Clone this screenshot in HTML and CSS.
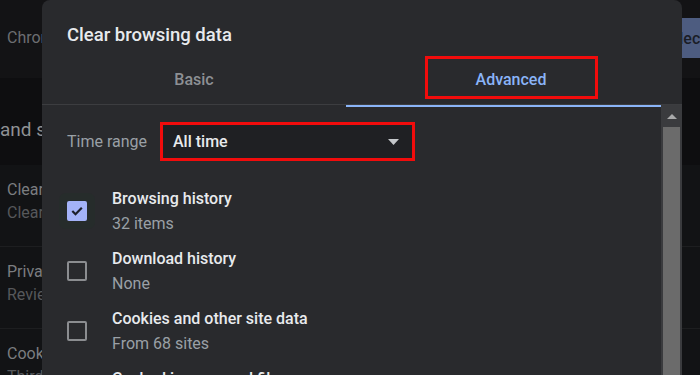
FILE: index.html
```html
<!DOCTYPE html>
<html lang="en">
<head>
    <meta charset="UTF-8">
    <meta name="viewport" content="width=device-width, initial-scale=1.0">
    <title>Clear browsing data</title>
    <link rel="stylesheet" href="styles.css">
</head>
<body>
    <!-- Settings page behind the dialog (dimmed) -->
    <div class="page">
        <div class="toolbar">
            <span class="toolbar-title">Chrome settings</span>
            <button class="toolbar-btn">Select</button>
        </div>
        <div class="section-title">and security</div>
        <div class="card">
            <div class="card-row">
                <div class="row-title">Clear browsing data</div>
                <div class="row-sub">Clear history, cookies, cache, and more</div>
            </div>
            <div class="card-row">
                <div class="row-title">Privacy Guide</div>
                <div class="row-sub">Review key privacy and security controls</div>
            </div>
            <div class="card-row">
                <div class="row-title">Cookies and other site data</div>
                <div class="row-sub">Third-party cookies are blocked</div>
            </div>
        </div>
    </div>

    <!-- Dialog -->
    <div class="dialog">
        <div class="dialog-title">Clear browsing data</div>
        <div class="tabs">
            <div class="tab">Basic</div>
            <div class="tab active"><span class="mark tab-mark">Advanced</span></div>
        </div>
        <div class="dialog-body">
            <div class="content">
                <div class="time-range">
                    <span class="label">Time range</span>
                    <div class="select mark">
                        <span>All time</span>
                        <svg class="caret" width="11" height="6" viewBox="0 0 11 6"><path d="M0 0h11L5.5 6z" fill="#c4c7ca"/></svg>
                    </div>
                </div>
                <div class="option">
                    <div class="checkbox checked">
                        <svg width="14" height="14" viewBox="0 0 14 14"><path d="M2.3 7l3.2 3.2L11.8 3.8" fill="none" stroke="#1c1f2a" stroke-width="2.2"/></svg>
                    </div>
                    <div class="option-text">
                        <div class="option-title">Browsing history</div>
                        <div class="option-sub">32 items</div>
                    </div>
                </div>
                <div class="option">
                    <div class="checkbox"></div>
                    <div class="option-text">
                        <div class="option-title">Download history</div>
                        <div class="option-sub">None</div>
                    </div>
                </div>
                <div class="option">
                    <div class="checkbox"></div>
                    <div class="option-text">
                        <div class="option-title">Cookies and other site data</div>
                        <div class="option-sub">From 68 sites</div>
                    </div>
                </div>
                <div class="option">
                    <div class="checkbox"></div>
                    <div class="option-text">
                        <div class="option-title">Cached images and files</div>
                        <div class="option-sub">Less than 320 MB</div>
                    </div>
                </div>
            </div>
            <div class="scrollbar">
                <div class="scroll-btn">
                    <svg width="10" height="5" viewBox="0 0 10 5"><path d="M0 5h10L5 0z" fill="#a8a9aa"/></svg>
                </div>
                <div class="scroll-thumb"></div>
            </div>
        </div>
    </div>
</body>
</html>
```

FILE: styles.css
```css
body {
    margin: 0;
    width: 700px;
    height: 375px;
    overflow: hidden;
    position: relative;
    background: #0e0e10;
    font-family: Roboto, "Noto Sans", sans-serif;
}

/* Background page */
.page {
    width: 700px;
}

.toolbar {
    height: 78px;
    display: grid;
    grid-template-columns: 638px 90px;
    align-items: start;
    background: #131315;
    padding-left: 7px;
    box-sizing: border-box;
}

.toolbar-title {
    color: #6c6e71;
    font-size: 16px;
    line-height: 20px;
    margin-top: 28px;
}

.toolbar-btn {
    margin-top: 18px;
    height: 40px;
    padding: 0 16px;
    border: none;
    border-radius: 4px;
    background: #4d5c80;
    color: #1a1d26;
    font-family: inherit;
    font-size: 16px;
    font-weight: 500;
    text-align: left;
}

.section-title {
    height: 87px;
    box-sizing: border-box;
    color: #8f9194;
    font-size: 19px;
    line-height: 22px;
    padding-top: 41px;
}

.card {
    background: #121315;
}

.card-row {
    height: 82px;
    padding: 13px 0 0 7px;
    box-sizing: border-box;
    border-bottom: 1px solid #1d1e20;
    line-height: 23px;
    font-size: 16px;
}

.row-title {
    color: #7b7d80;
}

.row-sub {
    color: #56585b;
}

/* Dialog */
.dialog {
    position: absolute;
    left: 42px;
    top: 0;
    width: 640px;
    height: 420px;
    background: #292a2d;
    border-radius: 8px;
}

.dialog-title {
    padding: 23px 0 9px 25px;
    line-height: 24px;
    font-size: 18.5px;
    font-weight: 500;
    color: #e8eaed;
}

.tabs {
    display: grid;
    grid-template-columns: 304px 336px;
    height: 49px;
    border-bottom: 1px solid #3c3d40;
    box-sizing: border-box;
}

.tab {
    display: flex;
    justify-content: center;
    align-items: center;
    padding-bottom: 3px;
    font-size: 16px;
    font-weight: 500;
    color: #8d9094;
}

.tab.active {
    color: #8ab4f8;
    border-bottom: 2px solid #8ab4f8;
    margin-bottom: -1px;
    padding-bottom: 6px;
}

/* red annotation boxes */
.mark {
    border: 3px solid #f10c0c;
}

.tab-mark {
    display: flex;
    align-items: center;
    justify-content: center;
    margin-left: -6px;
    padding-top: 4px;
    box-sizing: border-box;
    height: 43px;
    width: 173px;
}

.dialog-body {
    display: grid;
    grid-template-columns: 1fr 21px;
}

.content {
    padding: 17px 0 0 25px;
}

.time-range {
    display: flex;
    align-items: center;
    height: 39px;
}

.label {
    color: #9aa0a6;
    font-size: 16px;
    width: 93px;
}

.select {
    height: 33px;
    width: 226px;
    display: flex;
    align-items: center;
    justify-content: space-between;
    padding: 0 13px 0 10px;
    background: #1f2023;
    color: #e8eaed;
    font-size: 16px;
    font-weight: 500;
}

.caret {
    margin-top: 1px;
}

.option {
    display: flex;
    align-items: center;
    height: 50px;
    margin-top: 10px;
}

.time-range + .option {
    margin-top: 25px;
}

.checkbox {
    width: 16px;
    height: 16px;
    border: 2px solid #8b8d90;
    border-radius: 2px;
    margin-right: 25px;
    display: flex;
    align-items: center;
    justify-content: center;
}

.checkbox.checked {
    background: #a4b3f8;
    border-color: #a4b3f8;
    box-shadow: 0 0 0 8px rgba(30, 50, 40, 0.25);
}

.option-text {
    line-height: 25px;
    font-size: 16px;
}

.option-title {
    color: #e8eaed;
    font-weight: 500;
}

.option-sub {
    color: #9aa0a6;
}

.scrollbar {
    background: #3a3b3e;
    height: 300px;
    padding: 0 2px;
    display: flex;
    flex-direction: column;
}

.scroll-btn {
    height: 22px;
    display: flex;
    align-items: center;
    justify-content: center;
}

.scroll-thumb {
    flex: 1;
    background: #6b6b6b;
}
```
